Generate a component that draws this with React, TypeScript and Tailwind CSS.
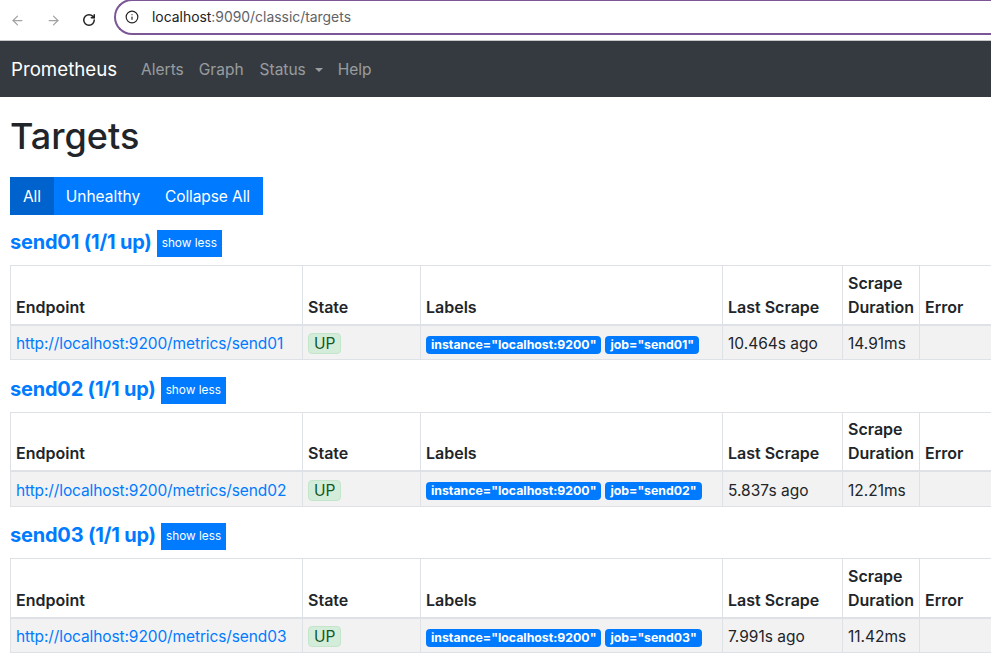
import React from 'react';
import { ArrowLeft, ArrowRight, RotateCw, Info } from 'lucide-react';

const groups = [
  { name: 'send01', last: '10.464s ago', duration: '14.91ms' },
  { name: 'send02', last: '5.837s ago', duration: '12.21ms' },
  { name: 'send03', last: '7.991s ago', duration: '11.42ms' },
];

function TargetGroup({ name, last, duration }: { name: string; last: string; duration: string }) {
  return (
    <section className="mb-[16.5px]">
      <div className="flex items-start h-[27px] mb-[8px]">
        <h2 className="text-[20px] leading-[24px] font-bold text-[#007bff] tracking-[-0.2px]">
          {name} (1/1 up)
        </h2>
        <button className="ml-[5px] h-[27px] px-[5px] bg-[#007bff] text-white text-[11.8px] leading-[27px]">
          show less
        </button>
      </div>
      <table className="table-fixed border-collapse w-[1050px] text-[15.5px] text-[#212529]">
        <colgroup>
          <col className="w-[292px]" />
          <col className="w-[118px]" />
          <col className="w-[302px]" />
          <col className="w-[120px]" />
          <col className="w-[77px]" />
          <col />
        </colgroup>
        <thead>
          <tr className="h-[59px]">
            {['Endpoint', 'State', 'Labels', 'Last Scrape', 'Scrape Duration', 'Error'].map((h) => (
              <th
                key={h}
                className="border border-[#dee2e6] border-b-2 px-[5px] pb-[5px] align-bottom text-left text-[16px] font-semibold leading-[24px]"
              >
                {h}
              </th>
            ))}
          </tr>
        </thead>
        <tbody>
          <tr className="h-[35px] bg-[#f2f2f2]">
            <td className="border border-[#dee2e6] px-[5px] pt-[3px] text-[#007bff] whitespace-nowrap tracking-[-0.11px]">
              http://localhost:9200/metrics/{name}
            </td>
            <td className="border border-[#dee2e6] px-[5px] pt-[3px]">
              <span className="inline-block h-[21px] px-[5px] leading-[20px] rounded-[4px] border border-[#c3e6cb] bg-[#d4edda] text-[#155724]">
                UP
              </span>
            </td>
            <td className="border border-[#dee2e6] px-[5px] pt-[2px] whitespace-nowrap">
              <span className="inline-block h-[18px] px-[5px] rounded-[4px] bg-[#007bff] text-white text-[12.3px] font-bold leading-[18px]">
                instance="localhost:9200"
              </span>
              <span className="inline-block ml-[4px] h-[18px] px-[5px] rounded-[4px] bg-[#007bff] text-white text-[12.3px] font-bold leading-[18px]">
                job="{name}"
              </span>
            </td>
            <td className="border border-[#dee2e6] px-[5px] pt-[3px] whitespace-nowrap">{last}</td>
            <td className="border border-[#dee2e6] px-[5px] pt-[3px] whitespace-nowrap">{duration}</td>
            <td className="border border-[#dee2e6] px-[5px]"></td>
          </tr>
        </tbody>
      </table>
    </section>
  );
}

export default function App() {
  return (
    <div className="h-[654px] overflow-hidden bg-white font-['Inter',sans-serif]">
      <div className="h-[41px] flex items-center border-b border-[#c8c8c8]">
        <div className="flex items-center w-[114px] pl-[10px] gap-[21px]">
          <ArrowLeft className="w-[15px] h-[15px] text-[#a3a3a3]" />
          <ArrowRight className="w-[15px] h-[15px] text-[#a3a3a3]" />
          <RotateCw className="w-[14px] h-[14px] text-[#222]" strokeWidth={2.6} />
        </div>
        <div className="flex-1 h-[36px] flex items-center -mt-[6px] pl-[9px] rounded-l-[18px] border-2 border-r-0 border-[#7b5798]">
          <Info className="w-[14px] h-[14px] text-[#222]" />
          <span className="ml-[13px] text-[13.9px] text-[#5f6368]">
            <span className="text-[#222]">localhost</span>:9090/classic/targets
          </span>
        </div>
      </div>

      <nav className="h-[56px] flex items-center bg-[#343a40] pl-[11px] pt-[2px] text-[15.5px]">
        <span className="text-white text-[18.7px]">Prometheus</span>
        <span className="ml-[24px] text-white/50">Alerts</span>
        <span className="ml-[15px] text-white/50">Graph</span>
        <span className="ml-[16px] text-white/50">Status</span>
        <span className="ml-[9px] w-0 h-0 border-x-[4px] border-x-transparent border-t-[4px] border-t-white/50"></span>
        <span className="ml-[15px] text-white/50">Help</span>
      </nav>

      <main className="pl-[10px]">
        <h1 className="mt-[15px] h-[48px] text-[36px] leading-[48px] font-medium text-[#212529]">Targets</h1>
        <div className="mt-[17px] flex w-fit h-[38px] text-white text-[15.5px] leading-[40px]">
          <button className="w-[44px] bg-[#0062cc]">All</button>
          <button className="w-[98px] bg-[#007bff]">Unhealthy</button>
          <button className="w-[111px] bg-[#007bff] tracking-[-0.1px]">Collapse All</button>
        </div>
        <div className="mt-[15px]">
          {groups.map((g) => (
            <TargetGroup key={g.name} {...g} />
          ))}
        </div>
      </main>
    </div>
  );
}
